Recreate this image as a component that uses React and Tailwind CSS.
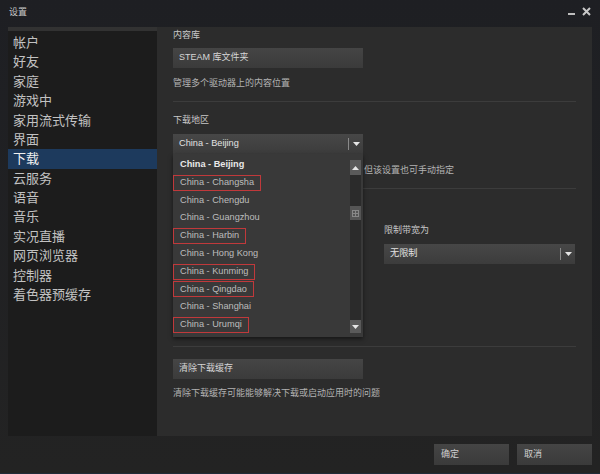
import React from "react";

const FONT = "font-['Liberation_Sans','Noto_Sans_CJK_SC',sans-serif]";

const NAV = [
  "帐户",
  "好友",
  "家庭",
  "游戏中",
  "家用流式传输",
  "界面",
  "下载",
  "云服务",
  "语音",
  "音乐",
  "实况直播",
  "网页浏览器",
  "控制器",
  "着色器预缓存",
];

const REGIONS = [
  { name: "China - Beijing", current: true },
  { name: "China - Changsha", mark: true },
  { name: "China - Chengdu" },
  { name: "China - Guangzhou" },
  { name: "China - Harbin", mark: true },
  { name: "China - Hong Kong" },
  { name: "China - Kunming", mark: true },
  { name: "China - Qingdao", mark: true },
  { name: "China - Shanghai" },
  { name: "China - Urumqi", mark: true },
];

function DownArrow({ className = "" }) {
  return (
    <svg width="7" height="4" viewBox="0 0 7 4" className={className}>
      <path d="M0 0 H7 L3.5 4 Z" fill="#e6e6e6" />
    </svg>
  );
}

function Select({ value, children }) {
  return (
    <div className="relative h-[20px] w-full">
      <div className="flex h-full items-center bg-gradient-to-b from-[#474747] to-[#3c3c3c] pl-[6px] text-[9.2px] text-[#e2e2e2]">
        <span className="flex-1">{value}</span>
        <span className="h-[12px] w-px bg-[#8a8a8a]" />
        <span className="flex w-[14px] justify-center">
          <DownArrow />
        </span>
      </div>
      {children}
    </div>
  );
}

function PlainButton({ label }) {
  return (
    <div className="flex h-[20px] w-[190px] items-center bg-gradient-to-b from-[#454545] to-[#3b3b3b] pl-[6px] text-[9px] text-[#d6d6d6]">
      {label}
    </div>
  );
}

function Divider() {
  return <div className="h-px w-full bg-[#3c3c3c]" />;
}

function RegionList() {
  return (
    <div className="absolute left-0 top-full z-10 flex h-[183px] w-full bg-[#393939] shadow-[0_2px_4px_rgba(0,0,0,0.5)]">
      <div className="flex flex-1 flex-col pt-[2px]">
        {REGIONS.map((r) => (
          <div key={r.name} className="flex h-[17.8px] items-center">
            <span
              className={
                "flex h-[16px] items-center border px-[6px] text-[9.2px] " +
                (r.mark ? "border-[#c0393b] " : "border-transparent ") +
                (r.current ? "font-bold text-[#e8e8e8]" : "text-[#bdbdbd]")
              }
            >
              {r.name}
            </span>
          </div>
        ))}
      </div>
      {/* scrollbar */}
      <div className="mr-[2px] mt-[6px] flex h-[173px] w-[11px] flex-col bg-[#2b2b2b]">
        <div className="flex h-[15px] items-center justify-center bg-[#5a5a5a]">
          <svg width="7" height="4" viewBox="0 0 7 4">
            <path d="M0 4 H7 L3.5 0 Z" fill="#e6e6e6" />
          </svg>
        </div>
        <div className="h-[31px]" />
        <div className="flex h-[14px] items-center justify-center bg-[#555]">
          <svg width="7" height="7" viewBox="0 0 7 7">
            <rect x="0.5" y="0.5" width="6" height="6" fill="none" stroke="#888" />
            <path d="M1 3.5 H6 M3.5 1 V6" stroke="#888" />
          </svg>
        </div>
        <div className="flex-1" />
        <div className="flex h-[13px] items-center justify-center bg-[#5a5a5a]">
          <DownArrow />
        </div>
      </div>
    </div>
  );
}

export default function App() {
  return (
    <div
      className={`${FONT} flex h-[474px] w-[600px] flex-col bg-gradient-to-b from-[#1e1f23] to-[#232323] border-b border-[#1f2b38]`}
    >
      {/* title bar */}
      <div className="flex h-[27px] items-start pt-[6px]">
        <span className="ml-[9px] text-[9px] text-[#c8c8c8]">设置</span>
        <div className="ml-auto mr-[9px] flex items-center gap-[6px]">
          <svg width="8" height="10" viewBox="0 0 8 10">
            <rect x="0" y="7" width="7" height="2" fill="#bdbdbd" />
          </svg>
          <svg width="9" height="9" viewBox="0 0 9 9">
            <path d="M1 1 L8 8 M8 1 L1 8" stroke="#c8c8c8" strokeWidth="2" />
          </svg>
        </div>
      </div>

      {/* body */}
      <div className="mx-[8px] flex h-[409px]">
        <div className="flex w-[149px] flex-col border-t-4 border-[#323232] bg-[#1c1c1c] pt-[2px]">
          {NAV.map((n) => (
            <div
              key={n}
              className={
                "flex h-[19.4px] items-center pl-[5px] text-[13px] " +
                (n === "下载" ? "bg-[#1d3a5d] text-[#f0f0f0]" : "text-[#c2c2c2]")
              }
            >
              {n}
            </div>
          ))}
        </div>

        <div className="flex flex-1 flex-col bg-[#2c2c2c] px-[16px] text-[9px]">
          <div className="mt-[2px] h-[12px] leading-[12px] text-[#c8c8c8]">内容库</div>
          <div className="mt-[7px]">
            <PlainButton label="STEAM 库文件夹" />
          </div>
          <div className="mt-[9px] h-[12px] leading-[12px] text-[#b3b3b3]">
            管理多个驱动器上的内容位置
          </div>
          <div className="mt-[12px]">
            <Divider />
          </div>

          <div className="mt-[12px] h-[12px] leading-[12px] text-[#c8c8c8]">下载地区</div>
          <div className="mt-[8px] w-[190px]">
            <Select value="China - Beijing">
              <RegionList />
            </Select>
          </div>
          <div className="mt-[10px] h-[12px] whitespace-nowrap leading-[12px] text-[#b3b3b3]">
            <span className="invisible inline-block w-[191px] overflow-hidden align-top">
              Steam 会自动选择最近的下载服务器，
            </span>
            但该设置也可手动指定
          </div>
          <div className="mt-[12px]">
            <Divider />
          </div>

          <div className="mt-[35px] grid grid-cols-[190px_191px] gap-x-[21px]">
            <div />
            <div className="flex flex-col">
              <div className="h-[12px] leading-[12px] text-[#c8c8c8]">限制带宽为</div>
              <div className="mt-[8px]">
                <Select value="无限制" />
              </div>
            </div>
          </div>

          <div className="mt-[82px]">
            <Divider />
          </div>
          <div className="mt-[12px]">
            <PlainButton label="清除下载缓存" />
          </div>
          <div className="mt-[8px] h-[12px] leading-[12px] text-[#b3b3b3]">
            清除下载缓存可能能够解决下载或启动应用时的问题
          </div>
        </div>
      </div>

      {/* footer buttons */}
      <div className="mr-[8px] mt-[8px] flex justify-end gap-[8px] text-[9px] text-[#cfcfcf]">
        <div className="flex h-[21px] w-[75px] items-center bg-gradient-to-b from-[#454545] to-[#3a3a3a] pl-[7px]">
          确定
        </div>
        <div className="flex h-[21px] w-[75px] items-center bg-gradient-to-b from-[#454545] to-[#3a3a3a] pl-[7px]">
          取消
        </div>
      </div>
    </div>
  );
}
